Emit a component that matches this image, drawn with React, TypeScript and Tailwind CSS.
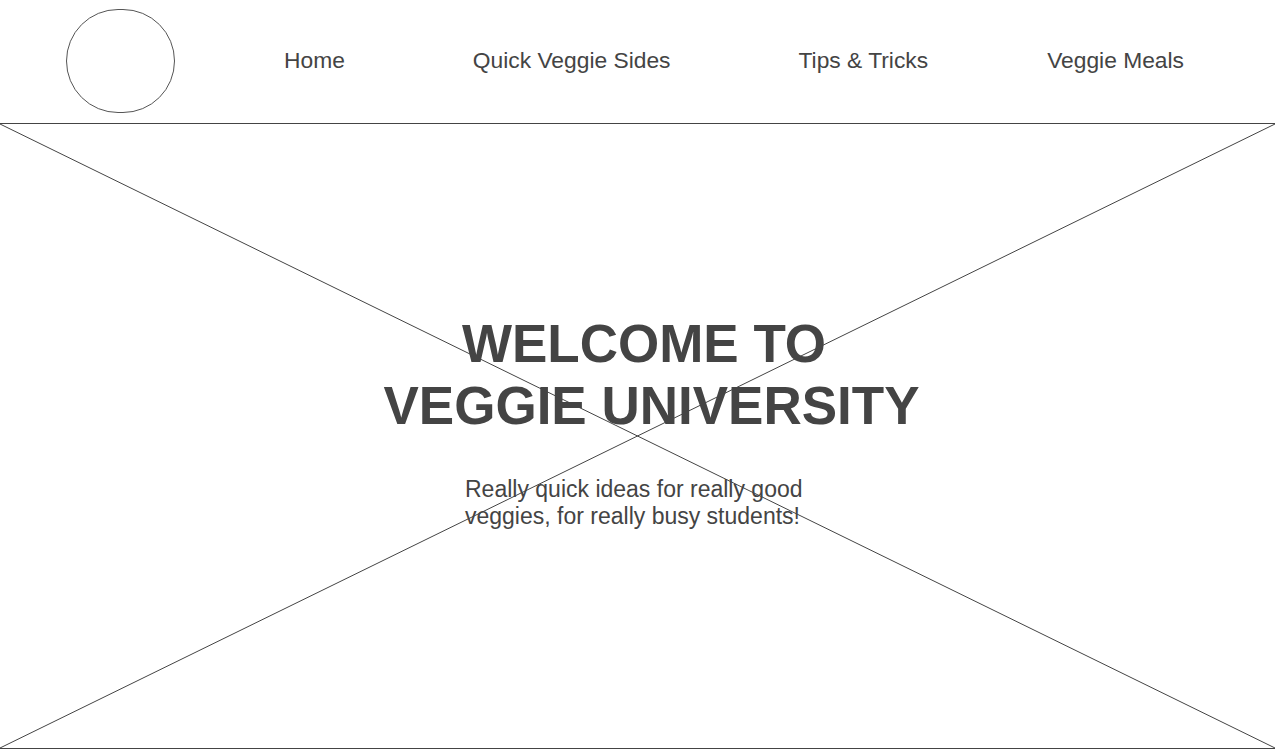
import React from "react";

export default function App() {
  return (
    <div
      className="w-[1275px] h-[749px] bg-white text-[#444444] overflow-hidden"
      style={{ fontFamily: '"Liberation Sans", Arial, sans-serif' }}
    >
      <header className="h-[124px] flex items-center border-b border-[#444444]">
        <div className="ml-[66px] mb-[1px] w-[109px] h-[104px] rounded-full border border-[#555555]" />
        <nav className="flex items-center mb-[2px] text-[22.8px] leading-none">
          <a className="ml-[109px]">Home</a>
          <a className="ml-[128px]">Quick Veggie Sides</a>
          <a className="ml-[128px]">Tips &amp; Tricks</a>
          <a className="ml-[119px]">Veggie Meals</a>
        </nav>
      </header>
      <section className="relative h-[625px] border-b border-[#444444]">
        <svg
          className="absolute inset-0 w-full h-full"
          viewBox="0 0 1275 624"
          preserveAspectRatio="none"
        >
          <line x1="0" y1="0" x2="1275" y2="624" stroke="#444444" strokeWidth="1" />
          <line x1="1275" y1="0" x2="0" y2="624" stroke="#444444" strokeWidth="1" />
        </svg>
        <div className="relative flex flex-col items-center pt-[189px]">
          <h1 className="w-full pl-[28px] text-center font-bold text-[53px] leading-[62px]">
            <span className="block pr-[15px]">WELCOME TO</span>
            <span className="block">VEGGIE UNIVERSITY</span>
          </h1>
          <p className="mt-[39px] w-[345px] text-[23px] leading-[27px]">
            Really quick ideas for really good veggies, for really busy students!
          </p>
        </div>
      </section>
    </div>
  );
}
